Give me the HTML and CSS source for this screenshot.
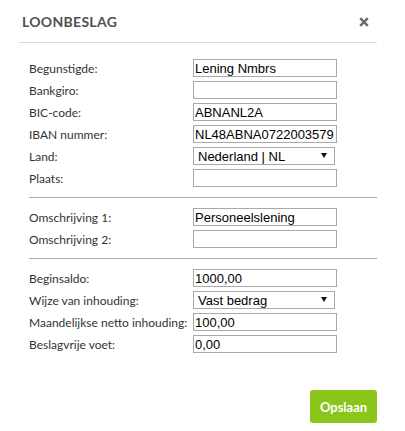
FILE: index.html
```html
<!DOCTYPE html>
<html>
<head>
<meta charset="utf-8">
<link rel="stylesheet" href="styles.css">
</head>
<body>
<div class="dialog">
  <div class="header">
    <h1 class="title">LOONBESLAG</h1>
    <svg class="close" width="10" height="10" viewBox="0 0 10 10"><path d="M1.2 1.2 L8.8 8.8 M8.8 1.2 L1.2 8.8" stroke="#6b6b6b" stroke-width="2.4" stroke-linecap="butt"/></svg>
  </div>
  <form class="form">
    <div class="group">
      <div class="row"><label class="label">Begunstigde:</label><input class="field" value="Lening Nmbrs"></div>
      <div class="row"><label class="label">Bankgiro:</label><input class="field" value=""></div>
      <div class="row"><label class="label">BIC-code:</label><input class="field" value="ABNANL2A"></div>
      <div class="row"><label class="label">IBAN nummer:</label><input class="field" value="NL48ABNA0722003579"></div>
      <div class="row"><label class="label">Land:</label><div class="select"><span>Nederland | NL</span><svg class="arrow" width="6" height="5" viewBox="0 0 6 5"><path d="M0 0 H6 L3 5 Z" fill="#111"/></svg></div></div>
      <div class="row"><label class="label">Plaats:</label><input class="field" value=""></div>
    </div>
    <div class="group">
      <div class="row"><label class="label">Omschrijving 1:</label><input class="field" value="Personeelslening"></div>
      <div class="row"><label class="label">Omschrijving 2:</label><input class="field" value=""></div>
    </div>
    <div class="group last">
      <div class="row"><label class="label">Beginsaldo:</label><input class="field" value="1000,00"></div>
      <div class="row"><label class="label">Wijze van inhouding:</label><div class="select"><span>Vast bedrag</span><svg class="arrow" width="6" height="5" viewBox="0 0 6 5"><path d="M0 0 H6 L3 5 Z" fill="#111"/></svg></div></div>
      <div class="row"><label class="label">Maandelijkse netto inhouding:</label><input class="field" value="100,00"></div>
      <div class="row"><label class="label">Beslagvrije voet:</label><input class="field" value="0,00"></div>
    </div>
    <div class="actions">
      <button type="button" class="btn">Opslaan</button>
    </div>
  </form>
</div>
</body>
</html>
```
FILE: styles.css
```css
html, body {
  margin: 0;
  padding: 0;
  background: #ffffff;
}
.dialog {
  width: 358px;
  margin-left: 19px;
  font-family: Lato, "Open Sans", sans-serif;
}
.header {
  height: 43px;
  border-bottom: 1px solid #dddddd;
  display: flex;
  align-items: center;
  justify-content: space-between;
  padding: 0 8px 0 3px;
  box-sizing: border-box;
}
.title {
  margin: 0;
  padding-top: 1px;
  font-size: 14px;
  font-weight: 700;
  color: #505050;
  letter-spacing: 0.3px;
}
.close {
  display: block;
  margin-top: 2px;
}
.form {
  margin: 0 0 0 10px;
  padding-top: 16px;
}
.group {
  border-bottom: 1px solid #ababab;
  padding-bottom: 6px;
  margin-bottom: 10px;
}
.group.last {
  border-bottom: none;
}
.row {
  display: flex;
  align-items: center;
  height: 18px;
  margin-bottom: 4px;
}
.label {
  width: 164px;
  flex: none;
  white-space: nowrap;
  font-size: 12px;
  letter-spacing: 0;
  color: #333333;
}
.field {
  width: 144px;
  height: 18px;
  box-sizing: border-box;
  border: 1px solid #a9a9a9;
  padding: 0 1px;
  margin: 0;
  font-family: "Liberation Sans", Arial, sans-serif;
  font-size: 13px;
  color: #000000;
  outline: none;
}
.select {
  width: 142px;
  height: 18px;
  box-sizing: border-box;
  border: 1px solid #a9a9a9;
  display: flex;
  align-items: center;
  justify-content: space-between;
  padding: 0 7px 0 4px;
  font-family: "Liberation Sans", Arial, sans-serif;
  font-size: 13px;
  color: #000000;
}
.arrow {
  display: block;
  margin-top: -1px;
}
.actions {
  display: flex;
  justify-content: flex-end;
  padding-top: 17px;
}
.btn {
  width: 67px;
  height: 33px;
  border: none;
  border-radius: 3px;
  background: #8cc51a;
  color: #ffffff;
  font-family: Lato, "Open Sans", sans-serif;
  font-size: 13px;
  font-weight: 700;
  padding: 0;
}
```
